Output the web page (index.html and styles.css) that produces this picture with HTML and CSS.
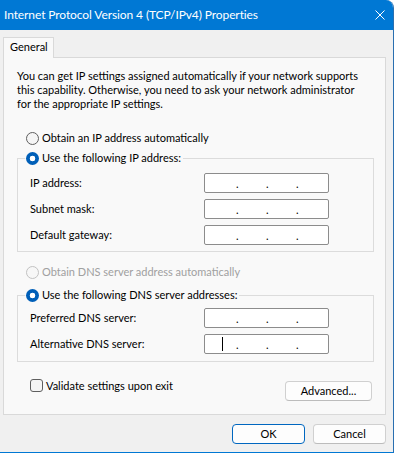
FILE: index.html
```html
<!DOCTYPE html>
<html>
<head>
<meta charset="utf-8">
<title>Internet Protocol Version 4 (TCP/IPv4) Properties</title>
<link rel="stylesheet" href="styles.css">
</head>
<body>
<div class="window">
  <div class="titlebar">
    <span class="title">Internet Protocol Version 4 (TCP/IPv4) Properties</span>
    <svg class="close" width="10" height="10" viewBox="0 0 10 10"><path d="M0.5 0.5 L9.5 9.5 M9.5 0.5 L0.5 9.5" stroke="#fff" stroke-width="1" fill="none"/></svg>
  </div>
  <div class="body">
    <div class="tabs"><div class="tab">General</div></div>
    <div class="panel">
      <p class="desc">You can get IP settings assigned automatically if your network supports this capability. Otherwise, you need to ask your network administrator for the appropriate IP settings.</p>

      <div class="radio-row first">
        <span class="radio"></span><span>Obtain an IP address automatically</span>
      </div>

      <fieldset class="group g1">
        <legend class="radio-row"><span class="radio checked"></span><span>Use the following IP address:</span></legend>
        <div class="fields">
          <span class="lbl">IP address:</span>
          <div class="ip"><span class="dot">.</span><span class="dot">.</span><span class="dot">.</span></div>
          <span class="lbl">Subnet mask:</span>
          <div class="ip"><span class="dot">.</span><span class="dot">.</span><span class="dot">.</span></div>
          <span class="lbl">Default gateway:</span>
          <div class="ip"><span class="dot">.</span><span class="dot">.</span><span class="dot">.</span></div>
        </div>
      </fieldset>

      <div class="radio-row disabled">
        <span class="radio"></span><span>Obtain DNS server address automatically</span>
      </div>

      <fieldset class="group g2">
        <legend class="radio-row"><span class="radio checked"></span><span>Use the following DNS server addresses:</span></legend>
        <div class="fields">
          <span class="lbl">Preferred DNS server:</span>
          <div class="ip"><span class="dot">.</span><span class="dot">.</span><span class="dot">.</span></div>
          <span class="lbl">Alternative DNS server:</span>
          <div class="ip focus"><span class="caret"></span><span class="dot">.</span><span class="dot">.</span><span class="dot">.</span></div>
        </div>
      </fieldset>

      <div class="bottom-row">
        <div class="check-row"><span class="checkbox"></span><span>Validate settings upon exit</span></div>
        <button class="btn adv">Advanced...</button>
      </div>
    </div>
    <div class="footer">
      <button class="btn primary">OK</button>
      <button class="btn">Cancel</button>
    </div>
  </div>
</div>
</body>
</html>
```
FILE: styles.css
```css
* { box-sizing: border-box; }
html, body { margin: 0; padding: 0; background: #ffffff; }
body {
  font-family: Lato, "Liberation Sans", sans-serif;
  font-size: 11px;
  line-height: 14px;
  color: #000;
}
.window {
  width: 394px;
  height: 453px;
  background: #f0f0f0;
  border-right: 1px solid #2a6fb0;
  border-bottom: 1px solid #0078d4;
  border-top-right-radius: 8px;
  overflow: hidden;
  display: flex;
  flex-direction: column;
}
.titlebar {
  height: 30px;
  flex: none;
  background: #0078d4;
  color: #fff;
  display: flex;
  align-items: center;
  padding-left: 4px;
  padding-right: 8px;
}
.title {
  font-size: 12px;
  line-height: 30px;
  letter-spacing: -0.1px;
}
.close { margin-left: auto; display: block; }
.body {
  padding: 7px 7px 0 3px;
  display: flex;
  flex-direction: column;
}
.tabs { display: flex; }
.tab {
  width: 51px;
  height: 21px;
  padding: 2px 0 0 6px;
  border: 1px solid #d9d9d9;
  border-bottom: none;
  background: #f9f9f9;
  margin-bottom: -1px;
  position: relative;
  z-index: 1;
}
.panel {
  height: 358px;
  border: 1px solid #d9d9d9;
  background: #f9f9f9;
  display: flex;
  flex-direction: column;
}
.desc {
  margin: 0;
  padding: 11px 0 0 13px;
  width: 359px;
}
.radio-row {
  display: flex;
  align-items: center;
  height: 16px;
  gap: 3px;
}
.radio-row.first { margin: 19px 0 0 22px; }
.radio-row.disabled { margin: 12px 0 0 22px; color: #a0a0a0; }
.radio {
  width: 13px;
  height: 13px;
  border-radius: 50%;
  border: 1px solid #5f5f5f;
  background: #f5f5f5;
  flex: none;
}
.radio.checked {
  border: none;
  background: radial-gradient(circle, #ffffff 0 2.6px, #005fb8 3.1px);
}
.disabled .radio { border-color: #c2c2c2; background: #f7f7f7; }
.group {
  margin: 0 11px 0 13px;
  padding: 0;
  border: 1px solid #dcdcdc;
  min-width: 0;
}
.group legend {
  margin-left: 7px;
  padding: 0 2px 0 1px;
}
.g1 { margin-top: 4px; }
.g2 { margin-top: 7px; }
.fields {
  display: grid;
  grid-template-columns: 174px 125px;
  row-gap: 6px;
  align-items: center;
  padding-left: 12px;
}
.g1 .fields { padding-top: 7px; padding-bottom: 6px; }
.g2 .fields { padding-top: 5px; padding-bottom: 7px; }
.ip {
  height: 20px;
  background: #fff;
  border: 1px solid #8c8c8c;
  border-radius: 2px;
  display: flex;
  align-items: center;
  padding-left: 31px;
  padding-top: 1px;
}
.ip.focus { padding-left: 17px; }
.dot { width: 30px; line-height: 14px; }
.caret {
  width: 1px;
  height: 14px;
  background: #000;
  margin-right: 13px;
  margin-top: -1px;
}
.bottom-row {
  margin: 17px 13px 0 26px;
  display: flex;
  justify-content: space-between;
  align-items: flex-start;
}
.check-row {
  display: flex;
  align-items: center;
  gap: 3px;
  height: 13px;
}
.checkbox {
  width: 13px;
  height: 13px;
  border: 1px solid #5f5f5f;
  border-radius: 3px;
  background: #f5f5f5;
  flex: none;
}
.btn {
  font: inherit;
  color: #000;
  height: 20px;
  padding: 0;
  background: #fdfdfd;
  border: 1px solid #d0d0d0;
  border-bottom-color: #bcbcbc;
  border-radius: 4px;
  text-align: center;
  line-height: 16px;
}
.adv { width: 87px; margin-top: 2px; }
.footer {
  display: flex;
  justify-content: flex-end;
  gap: 8px;
  margin-top: 9px;
  padding-right: 0;
}
.footer .btn { width: 73px; }
.btn.primary { border: 1px solid #0067c0; }
```
